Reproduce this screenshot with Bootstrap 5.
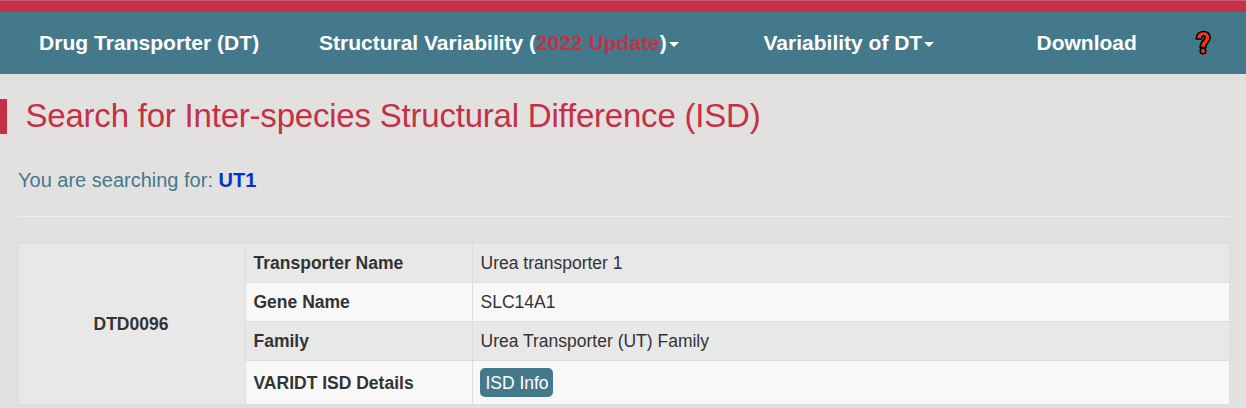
<!DOCTYPE html>
<html lang="en">
<head>
<meta charset="utf-8">
<meta name="viewport" content="width=device-width, initial-scale=1">
<title>VARIDT</title>
<link rel="stylesheet" href="https://cdn.jsdelivr.net/npm/bootstrap@5.3.0/dist/css/bootstrap.min.css">
<style>
body{font-family:"Liberation Sans",Arial,sans-serif;background:#e3e1e0;color:#333;height:408px;overflow:hidden}
.top-strip{height:12px;background:#c43147;border-top:1px solid #cc5d70}
.main-nav{height:62px;background:#44798b;font-size:21px;font-weight:700;line-height:30px}
.main-nav a{color:#fff;text-decoration:none;white-space:nowrap}
.item-dt{margin-left:39px;width:280px;letter-spacing:.04px}
.item-sv{width:444.5px}
.item-vdt{width:273px}
.item-dl{width:158.5px}
.update{color:#c43147}
.caret{display:inline-block;border:5px solid transparent;border-top-color:#fff;border-bottom:0;margin-left:2px;vertical-align:3px}
.page-title{height:35px;margin-top:25px;border-left:7px solid #c43147;padding-left:18.5px;color:#c43147;font-size:33px;font-weight:400;line-height:33px;letter-spacing:-.21px}
.query{margin:31px 0 0 18px;font-size:20px;line-height:30px;color:#44798b}
.query b{color:#0033cc}
.divider{height:1px;background:#eee;margin:21px 16px 25px 18px}
.info{width:1212px;margin-left:18px;border-collapse:separate;border-spacing:0;table-layout:fixed;border:solid #ddd;border-width:2px 1px 2px 1px;font-size:17.5px;line-height:24px}
.info td,.info th{height:39px;padding:0 7.5px;border:0 solid #ddd;vertical-align:middle}
.info th,.info td{border-left-width:1px}
.info th.code{border-left-width:0;text-align:center;background:#e8e8e8;padding:0 9px 0 7px}
.info tr:not(:last-child) :not(.code){border-bottom-width:1px}
.info tr:nth-child(odd){background:#e8e8e8}
.info tr:nth-child(even){background:#f8f8f8}
.info tr:last-child td{height:43px;padding-left:7px}
.info .btn-isd{background:#44798b;color:#fff;font-size:17.5px;line-height:29px;height:29px;width:73px;padding:1px 0 0 1px;border:0;border-radius:5px;display:block}
</style>
</head>
<body>
<div class="top-strip"></div>
<nav class="main-nav d-flex align-items-center">
<a class="item-dt" href="#">Drug Transporter (DT)</a>
<a class="item-sv" href="#">Structural Variability (<span class="update">2022 Update</span>)<span class="caret"></span></a>
<a class="item-vdt" href="#">Variability of DT<span class="caret"></span></a>
<a class="item-dl" href="#">Download</a>
<a class="d-flex" href="#" aria-label="Help"><svg width="18" height="26" viewBox="0 0 18 26"><g fill="none"><path d="M1.2 9C1.2-.8 15.2-.6 15.2 7.4C15.2 12 10.8 12.6 10.8 17.6H5.2C5.2 10.6 9.9 10.2 9.9 7.5C9.9 5.2 6.6 5.3 6.3 9Z" fill="#f5330c" stroke="#000" stroke-width="1.7" stroke-linejoin="round"/><circle cx="8" cy="21" r="2.8" fill="#f5330c" stroke="#000" stroke-width="1.6"/></g></svg></a>
</nav>
<h1 class="page-title mb-0">Search for Inter-species Structural Difference (ISD)</h1>
<p class="query mb-0">You are searching for: <b>UT1</b></p>
<div class="divider"></div>
<table class="info">
<colgroup><col style="width:226px"><col style="width:227px"><col></colgroup>
<tbody>
<tr><th class="code" rowspan="4">DTD0096</th><th>Transporter Name</th><td>Urea transporter 1</td></tr>
<tr><th>Gene Name</th><td>SLC14A1</td></tr>
<tr><th>Family</th><td>Urea Transporter (UT) Family</td></tr>
<tr><th>VARIDT ISD Details</th><td><a class="btn btn-isd" href="#">ISD Info</a></td></tr>
</tbody>
</table>
</body>
</html>
